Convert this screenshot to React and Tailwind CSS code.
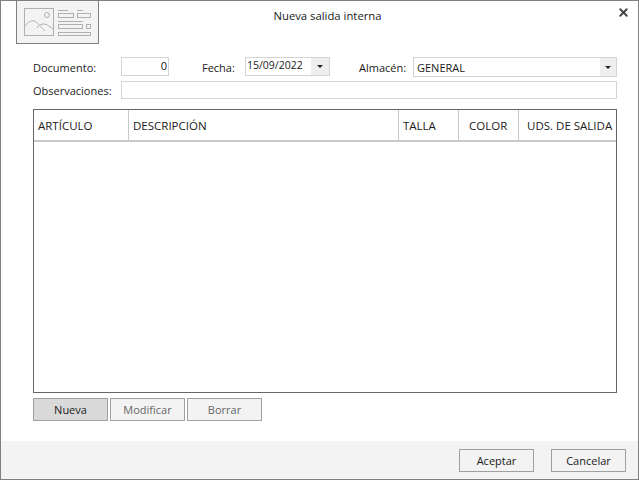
import { X } from 'lucide-react'

const columns = [
  { label: 'ARTÍCULO', className: 'w-[95px] pl-[4px]' },
  { label: 'DESCRIPCIÓN', className: 'w-[270px] pl-[4px]' },
  { label: 'TALLA', className: 'w-[60px] pl-[4px]' },
  { label: 'COLOR', className: 'w-[60px] pl-[10px]' },
  { label: 'UDS. DE SALIDA', className: 'flex-1 pl-[8px]' },
]

function Logo() {
  return (
    <div className="ml-[15px] w-[83px] h-[43px] border border-t-0 border-[#808080] bg-[#f3f3f3] shrink-0">
      <svg width="81" height="42" viewBox="0 0 81 42" fill="none" stroke="#b0b0b0" strokeWidth="1">
        <rect x="7.5" y="7.5" width="29" height="27" />
        <circle cx="30" cy="14" r="2.5" />
        <path d="M8 25c3-4 6-6 9-5 3 1 7 6 11 10M20 27c2-3 4-4 7-4 3 0 6 3 9 5" />
        <rect x="41.5" y="12.5" width="15" height="4" />
        <rect x="60.5" y="12.5" width="13" height="4" />
        <path d="M41 9.5h10M60 9.5h6M41 20.5h25" />
        <rect x="41.5" y="23.5" width="24" height="4" />
        <rect x="69.5" y="23.5" width="4" height="4" />
        <rect x="41.5" y="31.5" width="32" height="3" />
      </svg>
    </div>
  )
}

function Caret() {
  return <span className="w-0 h-0 border-x-[3px] border-x-transparent border-t-[3px] border-t-[#222]" />
}

function Button({ children, className }) {
  return (
    <button className={`w-[75px] h-[23px] border border-[#a0a0a0] text-[11px] leading-none ${className}`}>
      {children}
    </button>
  )
}

export default function App() {
  return (
    <div className="w-[639px] h-[480px] bg-white flex flex-col border border-[#808080] text-[#1a1a1a] text-[11px] font-['Open_Sans','Noto_Sans',sans-serif] overflow-hidden">
      {/* Cabecera */}
      <div className="flex h-[56px] shrink-0">
        <Logo />
        <div className="flex-1 text-center pt-[7px] pr-[61px] text-[11.3px] leading-[16px]">Nueva salida interna</div>
        <X size={13} strokeWidth={3.5} className="text-[#444] mt-[5px] mr-[8px]" />
      </div>

      <div className="flex-1 flex flex-col px-[32px] pr-[21px]">
        {/* Formulario */}
        <div className="flex items-start h-[24px]">
          <span className="w-[88px] leading-[22px] font-medium">Documento:</span>
          <div className="w-[48px] h-[19px] border border-[#d4d4d4] text-right pr-[1px] leading-[15px]">0</div>
          <span className="ml-[33px] w-[43px] leading-[22px]">Fecha:</span>
          <div className="w-[85px] h-[19px] border border-[#d4d4d4] flex leading-[15px] text-[10.5px]">
            <span className="flex-1 pl-[1px]">15/09/2022</span>
            <span className="w-[18px] bg-[#efefef] flex items-center justify-center"><Caret /></span>
          </div>
          <span className="ml-[29px] w-[54px] leading-[22px]">Almacén:</span>
          <div className="flex-1 h-[20px] border border-[#d4d4d4] flex leading-[20px]">
            <span className="flex-1 pl-[3px]">GENERAL</span>
            <span className="w-[16px] bg-[#efefef] flex items-center justify-center"><Caret /></span>
          </div>
        </div>
        <div className="flex items-start h-[28px]">
          <span className="w-[88px] leading-[20px] font-medium">Observaciones:</span>
          <div className="flex-1 h-[18px] border border-[#d4d4d4]" />
        </div>

        {/* Tabla */}
        <div className="h-[284px] border border-[#666]">
          <div className="flex h-[32px] border-b-2 border-[#c8c8c8] text-[11.5px] leading-[32px]">
            {columns.map((col) => (
              <div key={col.label} className={`${col.className} border-r border-[#c8c8c8] last:border-r-0 whitespace-nowrap`}>
                {col.label}
              </div>
            ))}
          </div>
        </div>

        <div className="flex gap-[2px] mt-[5px]">
          <Button className="bg-[#d9d9d9]">Nueva</Button>
          <Button className="bg-[#f3f3f3] text-[#666]">Modificar</Button>
          <Button className="bg-[#f3f3f3] text-[#666]">Borrar</Button>
        </div>
      </div>

      {/* Pie */}
      <div className="h-[38px] shrink-0 bg-[#f3f3f3] flex justify-end gap-[17px] pt-[8px] pr-[12px]">
        <Button className="bg-[#f3f3f3]">Aceptar</Button>
        <Button className="bg-[#f3f3f3]">Cancelar</Button>
      </div>
    </div>
  )
}
